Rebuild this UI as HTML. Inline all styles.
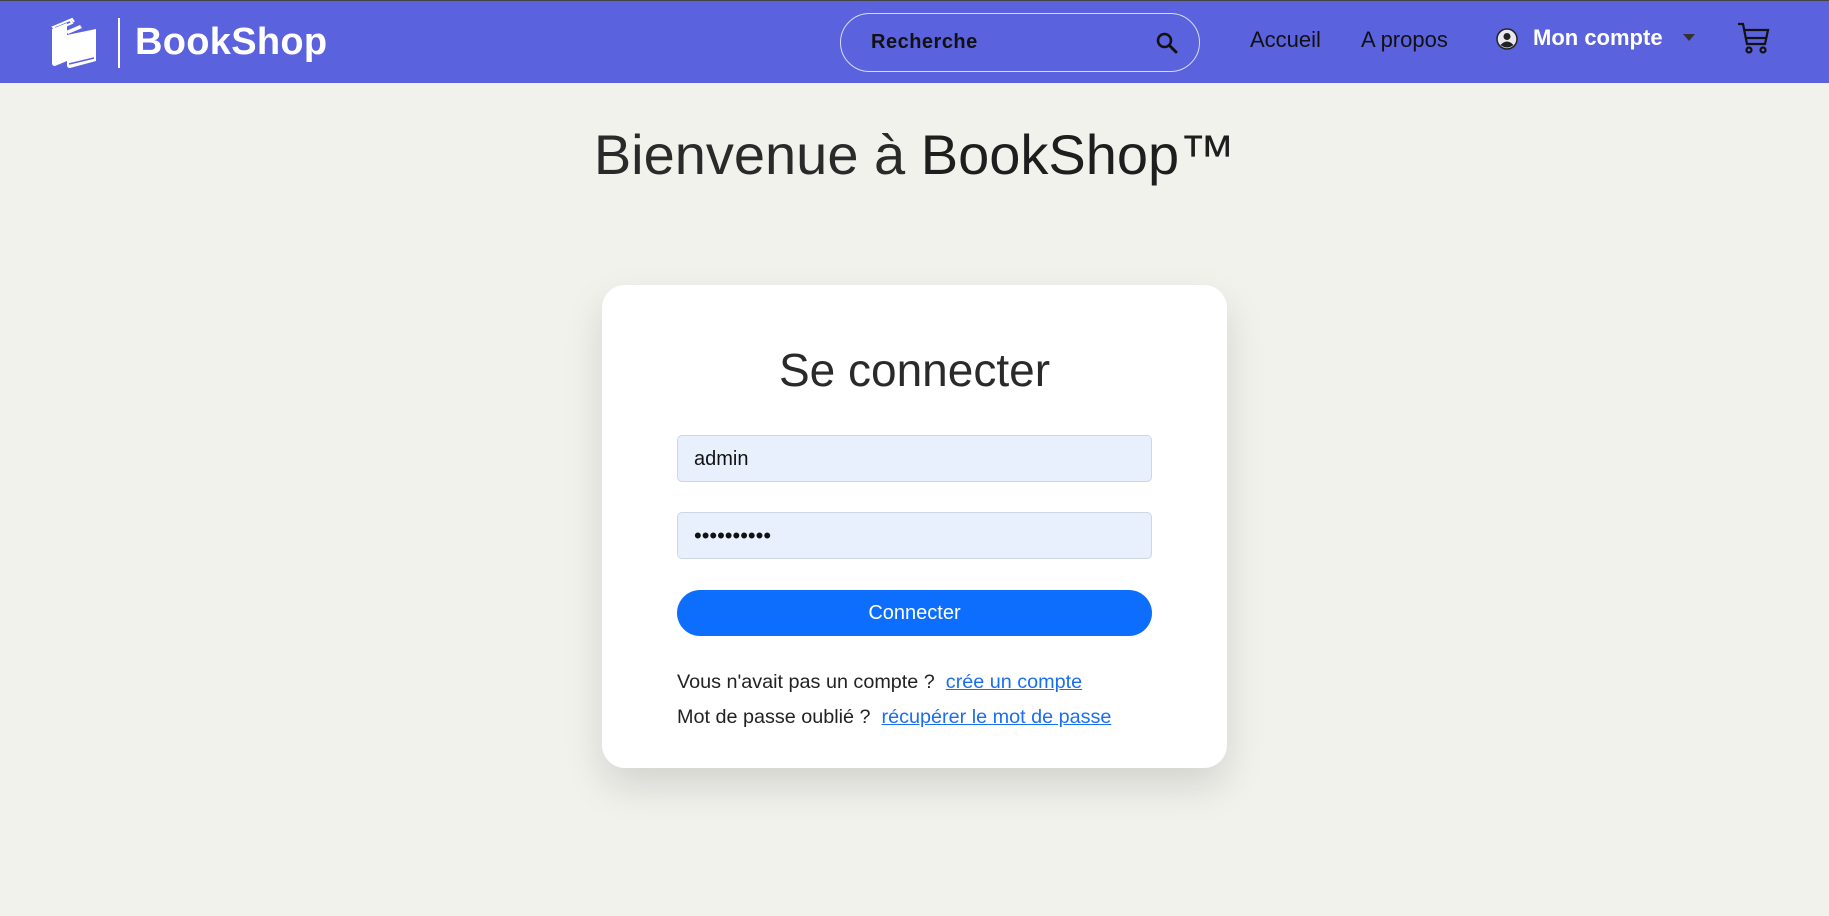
<!DOCTYPE html>
<html><head><meta charset="utf-8"><style>
*{box-sizing:border-box;margin:0;padding:0}
body{width:1829px;height:916px;background:#f2f2ed;font-family:"Liberation Sans","DejaVu Sans",sans-serif;position:relative;overflow:hidden;color:#212529}
.nav{position:absolute;left:0;top:0;width:1829px;height:83px;background:#5b62de;border-top:1px solid #444}
.abs{position:absolute}
.brand{left:135px;top:20px;font-size:38px;font-weight:bold;color:#fff;letter-spacing:0.3px}
.divider{left:118px;top:17px;width:2px;height:50px;background:#fff}
.search{left:840px;top:12px;width:360px;height:59px;border:1.5px solid #d8dbf7;border-radius:30px}
.search span{position:absolute;left:30px;top:17px;font-size:20px;font-weight:bold;color:#111;letter-spacing:0.5px}
.navl{font-size:22px;color:#111;top:26px}
.title{left:0;width:1829px;top:122px;text-align:center;font-size:56px;color:#2a2a2a}
.card{left:602px;top:285px;width:625px;height:483px;background:#fff;border-radius:23px;box-shadow:0 18px 40px rgba(0,0,0,0.13)}
.h{width:625px;top:343px;text-align:center;font-size:46px;color:#2a2a2a}
.inp{left:677px;width:475px;height:47px;background:#e8f0fe;border:1px solid #cfd6e2;border-radius:5px;font-size:20px;padding:12px 0 0 16px;color:#111}
.btn{left:677px;top:590px;width:475px;height:46px;background:#0d6efd;border-radius:23px;color:#fff;font-size:20px;text-align:center;line-height:46px}
.t{left:677px;font-size:19.8px;color:#222}
.t a{color:#1a6ef0;text-decoration:underline}
</style></head><body>
<div class="nav">
<svg class="abs" style="left:50px;top:16px" width="48" height="52" viewBox="0 0 48 52">
<path d="M3 10 L20 3 L22 6 L6 13 Z M8 8 L22 2 L24 5" fill="none" stroke="#fff" stroke-width="2"/>
<path d="M2 12 L17 6 L17 44 L5 49 Q2 49 2 46 Z" fill="#fff"/>
<path d="M16 14 L30 8 L32 11 L18 17 Z" fill="#fff"/>
<path d="M17 18 L46 12 L46 44 L20 51 Q17 51 17 48 Z" fill="#fff"/>
<path d="M19 47 L44 41" stroke="#5b62de" stroke-width="1.5"/>
</svg>
<div class="abs divider"></div>
<div class="abs brand">BookShop</div>
<div class="abs search"><span>Recherche</span>
<svg class="abs" style="left:314px;top:17px" width="24" height="24" viewBox="0 0 24 24"><circle cx="9.5" cy="9.5" r="6.5" fill="none" stroke="#111" stroke-width="2.5"/><path d="M14.5 14.5 L21 21" stroke="#111" stroke-width="3" stroke-linecap="round"/></svg>
</div>
<div class="abs navl" style="left:1250px">Accueil</div>
<div class="abs navl" style="left:1361px">A propos</div>
<svg class="abs" style="left:1496px;top:27px" width="22" height="22" viewBox="0 0 22 22"><circle cx="11" cy="11" r="10" fill="#e8e8ee" stroke="#222" stroke-width="1.5"/><circle cx="11" cy="8.5" r="3.5" fill="#222"/><path d="M4.5 17 Q11 10 17.5 17 Q11 22 4.5 17Z" fill="#222"/></svg>
<div class="abs navl" style="left:1533px;top:24px;color:#fff;font-weight:bold">Mon compte</div>
<svg class="abs" style="left:1683px;top:33px" width="12" height="8"><path d="M0 0 L12 0 L6 7Z" fill="#333"/></svg>
<svg class="abs" style="left:1736px;top:20px" width="34" height="34" viewBox="0 0 34 34" fill="none" stroke="#111" stroke-width="2.2"><path d="M2 3 H7 L11 23 H29 L32 9 H9"/><path d="M10 17 H30"/><circle cx="13" cy="29" r="2.5"/><circle cx="27" cy="29" r="2.5"/></svg>
</div>
<div class="abs title">Bienvenue à <span style="color:#1e1e1e">BookShop™</span></div>
<div class="abs card"></div>
<div class="abs h" style="left:602px">Se connecter</div>
<div class="abs inp" style="top:435px">admin</div>
<div class="abs inp" style="top:512px;font-size:22px;padding-top:10px">••••••••••</div>
<div class="abs btn">Connecter</div>
<div class="abs t" style="top:671px">Vous n'avait pas un compte ?&nbsp; <a>crée un compte</a></div>
<div class="abs t" style="top:706px">Mot de passe oublié ?&nbsp; <a>récupérer le mot de passe</a></div>
</body></html>
